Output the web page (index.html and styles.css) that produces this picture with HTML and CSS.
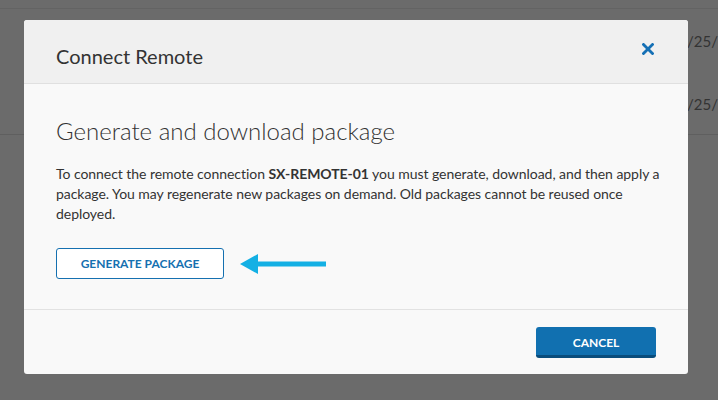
FILE: index.html
```html
<!DOCTYPE html>
<html>
<head>
<meta charset="utf-8">
<link rel="stylesheet" href="styles.css">
</head>
<body>
<div class="page">
  <div class="bg-table">
    <div class="bg-row top"></div>
    <div class="bg-row"><span class="bg-cell">5/25/</span></div>
    <div class="bg-row"><span class="bg-cell">5/25/</span></div>
  </div>
  <div class="modal">
    <div class="modal-header">
      <h1 class="modal-title">Connect Remote</h1>
      <button class="close" aria-label="Close">
        <svg width="12" height="12" viewBox="0 0 12 12"><path d="M1.5 1.5 L10.5 10.5 M10.5 1.5 L1.5 10.5" stroke="#1570b5" stroke-width="2.8" stroke-linecap="square"/></svg>
      </button>
    </div>
    <div class="modal-body">
      <h2 class="heading">Generate and download package</h2>
      <p class="text">To connect the remote connection <strong>SX-REMOTE-01</strong> you must generate, download, and then apply a package. You may regenerate new packages on demand. Old packages cannot be reused once deployed.</p>
      <div class="action-row">
        <button class="btn-outline">GENERATE PACKAGE</button>
        <svg class="arrow" width="88" height="26" viewBox="0 0 88 26"><path d="M0 13 L18 3 L18 10.5 L86 10.5 L86 15.5 L18 15.5 L18 23 Z" fill="#14b0e4"/></svg>
      </div>
    </div>
    <div class="modal-footer">
      <button class="btn-primary">CANCEL</button>
    </div>
  </div>
</div>
</body>
</html>
```
FILE: styles.css
```css
* { box-sizing: border-box; }
html, body { margin: 0; padding: 0; }
body {
  width: 718px;
  height: 400px;
  overflow: hidden;
  background: #6b6b6b;
  font-family: Lato, "Liberation Sans", sans-serif;
}
.page {
  position: relative;
  width: 718px;
  height: 400px;
}
.bg-table {
  position: absolute;
  left: 0; top: 0; right: 0;
}
.bg-row {
  height: 60px;
  border-bottom: 1px solid #5f5f5f;
  display: flex;
  align-items: center;
  justify-content: flex-end;
  color: #333;
  font-size: 15px;
}
.bg-row.top { height: 9px; border-bottom-color: #636363; }
.bg-row:nth-child(2) { height: 66px; border-bottom: none; }
.bg-cell { margin-right: 0; margin-top: -2px; }
.modal {
  position: absolute;
  left: 24px;
  top: 20px;
  width: 664px;
  height: 354px;
  background: #f9f9f9;
  border-radius: 3px;
  overflow: hidden;
  display: flex;
  flex-direction: column;
}
.modal-header {
  height: 64px;
  background: #f0f0f0;
  border-bottom: 1px solid #e0e0e0;
  display: flex;
  align-items: center;
  justify-content: space-between;
  padding: 0 34px 0 32px;
}
.modal-title {
  margin: 8px 0 0;
  font-size: 20px;
  font-weight: 400;
  color: #333;
}
.close {
  border: 0;
  background: none;
  padding: 0;
  margin-top: -6px;
  display: flex;
}
.modal-body {
  flex: 1;
  padding: 32px 26px 0 32px;
  border-bottom: 1px solid #e2e2e2;
}
.heading {
  margin: 0 0 18px;
  font-size: 24px;
  font-weight: 300;
  color: #333;
  line-height: 30px;
}
.text {
  margin: 0 0 24px;
  font-size: 14px;
  line-height: 20px;
  color: #333;
  letter-spacing: -0.05px;
}
.text strong { font-weight: 700; }
.action-row {
  display: flex;
  align-items: center;
  gap: 16px;
}
.btn-outline {
  width: 168px;
  height: 31px;
  border: 1px solid #1570b0;
  border-radius: 3px;
  background: #fff;
  color: #1570b0;
  font-family: inherit;
  font-size: 12px;
  font-weight: 700;
  padding: 0;
}
.arrow { display: block; }
.modal-footer {
  height: 64px;
  display: flex;
  align-items: flex-start;
  justify-content: flex-end;
  padding: 17px 32px 0;
}
.btn-primary {
  width: 120px;
  height: 31px;
  background: #1170b0;
  border: 0;
  border-bottom: 3px solid #0a4d7c;
  border-radius: 3px;
  color: #fff;
  font-family: inherit;
  font-size: 12px;
  font-weight: 700;
  padding: 2px 0 0;
}
```
